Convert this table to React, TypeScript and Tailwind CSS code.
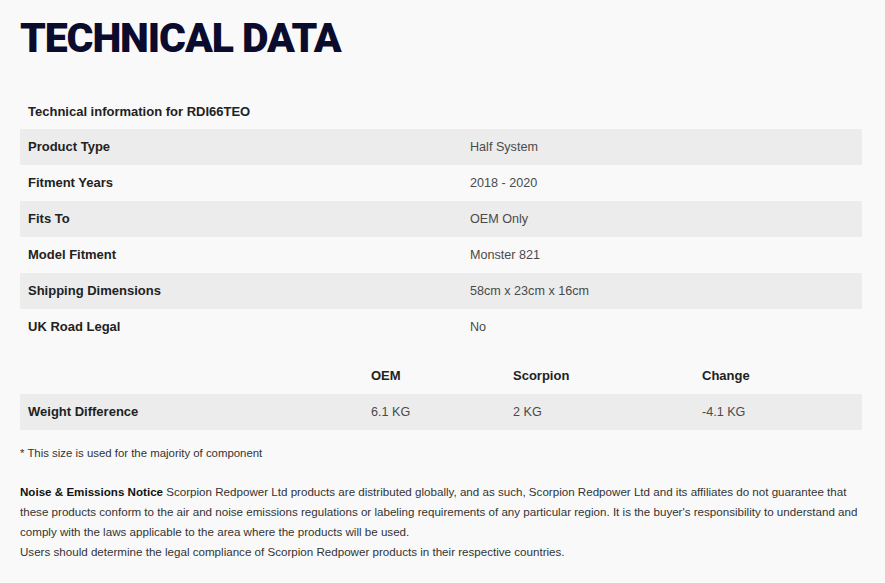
export default function App() {
  const specs = [
    ["Product Type", "Half System"],
    ["Fitment Years", "2018 - 2020"],
    ["Fits To", "OEM Only"],
    ["Model Fitment", "Monster 821"],
    ["Shipping Dimensions", "58cm x 23cm x 16cm"],
    ["UK Road Legal", "No"],
  ];

  return (
    <div className="min-h-[583px] w-full bg-[#f9f9f9] px-5 pt-[14px] font-['Liberation_Sans',Arial,sans-serif] text-[#222]">
      {/* Heading */}
      <h1 className="font-['Roboto',sans-serif] text-[41px] font-black leading-[48px] tracking-[-1.1px] text-[#0b0b2e]">
        TECHNICAL DATA
      </h1>

      {/* Spec table */}
      <table className="mt-[31px] w-[842px] border-collapse text-[13px]">
        <caption className="h-9 px-2 text-left align-middle font-bold leading-[38px]">
          Technical information for RDI66TEO
        </caption>
        <tbody>
          {specs.map(([label, value], i) => (
            <tr key={label} className={i % 2 === 0 ? "bg-[#ececec]" : ""}>
              <td className="h-9 w-[442px] px-2 font-bold">{label}</td>
              <td className="h-9 px-2 text-[12.6px] text-[#4a4a4a]">{value}</td>
            </tr>
          ))}
        </tbody>
      </table>

      {/* Weight table */}
      <table className="mt-[13px] w-[842px] border-collapse text-[13px]">
        <thead>
          <tr>
            <th className="h-9 w-[343px]"></th>
            <th className="h-9 w-[142px] px-2 text-left font-bold">OEM</th>
            <th className="h-9 w-[189px] px-2 text-left font-bold">Scorpion</th>
            <th className="h-9 px-2 text-left font-bold">Change</th>
          </tr>
        </thead>
        <tbody>
          <tr className="bg-[#ececec]">
            <td className="h-9 px-2 font-bold">Weight Difference</td>
            <td className="h-9 px-2 text-[12.6px] text-[#4a4a4a]">6.1 KG</td>
            <td className="h-9 px-2 text-[12.6px] text-[#4a4a4a]">2 KG</td>
            <td className="h-9 px-2 text-[12.6px] text-[#4a4a4a]">-4.1 KG</td>
          </tr>
        </tbody>
      </table>

      <p className="mt-[16px] text-[11.4px] leading-[14px] text-[#333]">
        * This size is used for the majority of component
      </p>

      {/* Notice */}
      <p className="mt-[22px] text-[11.6px] leading-[20px] text-[#333]">
        <span className="font-bold text-[#111]">Noise &amp; Emissions Notice</span> Scorpion Redpower Ltd products are
        distributed globally, and as such, Scorpion Redpower Ltd and its affiliates do not guarantee that these products
        conform to the air and noise emissions regulations or labeling requirements of any particular region. It is the
        buyer's responsibility to understand and comply with the laws applicable to the area where the products will be
        used.
        <br />
        Users should determine the legal compliance of Scorpion Redpower products in their respective countries.
      </p>
    </div>
  );
}
